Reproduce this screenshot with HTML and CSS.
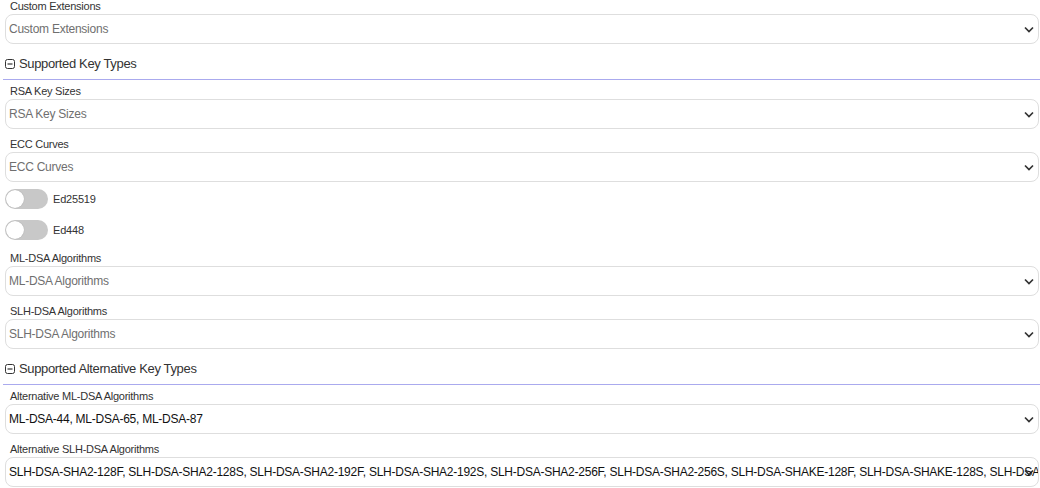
FILE: index.html
```html
<!doctype html>
<html lang="en">

<head>
  <meta charset="utf-8" />
  <meta name="viewport" content="width=device-width,initial-scale=1" />
  <title>Certificate Profile</title>
  <link rel="stylesheet" href="styles.css">
</head>

<body>
  <div id="root">
    <div class="field">
      <div class="label">Custom Extensions</div>
      <div class="select placeholder">Custom Extensions</div>
    </div>

    <div class="section-header">
      <svg class="toggle-icon" width="10" height="10" viewBox="0 0 10 10">
        <rect x="0.5" y="0.5" width="9" height="9" rx="2" fill="none" stroke="#333" stroke-width="1" />
        <line x1="2.5" y1="5" x2="7.5" y2="5" stroke="#333" stroke-width="1.2" />
      </svg>
      <span>Supported Key Types</span>
    </div>

    <div class="field">
      <div class="label">RSA Key Sizes</div>
      <div class="select placeholder">RSA Key Sizes</div>
    </div>
    <div class="field">
      <div class="label">ECC Curves</div>
      <div class="select placeholder">ECC Curves</div>
    </div>

    <div class="switches">
      <label class="switch-row">
        <span class="switch"><span class="knob"></span></span>
        <span class="switch-label">Ed25519</span>
      </label>
      <label class="switch-row">
        <span class="switch"><span class="knob"></span></span>
        <span class="switch-label">Ed448</span>
      </label>
    </div>

    <div class="field">
      <div class="label">ML-DSA Algorithms</div>
      <div class="select placeholder">ML-DSA Algorithms</div>
    </div>
    <div class="field">
      <div class="label">SLH-DSA Algorithms</div>
      <div class="select placeholder">SLH-DSA Algorithms</div>
    </div>

    <div class="section-header">
      <svg class="toggle-icon" width="10" height="10" viewBox="0 0 10 10">
        <rect x="0.5" y="0.5" width="9" height="9" rx="2" fill="none" stroke="#333" stroke-width="1" />
        <line x1="2.5" y1="5" x2="7.5" y2="5" stroke="#333" stroke-width="1.2" />
      </svg>
      <span>Supported Alternative Key Types</span>
    </div>

    <div class="field">
      <div class="label">Alternative ML-DSA Algorithms</div>
      <div class="select">ML-DSA-44, ML-DSA-65, ML-DSA-87</div>
    </div>
    <div class="field">
      <div class="label">Alternative SLH-DSA Algorithms</div>
      <div class="select">SLH-DSA-SHA2-128F, SLH-DSA-SHA2-128S, SLH-DSA-SHA2-192F, SLH-DSA-SHA2-192S, SLH-DSA-SHA2-256F, SLH-DSA-SHA2-256S, SLH-DSA-SHAKE-128F, SLH-DSA-SHAKE-128S, SLH-DSA-SHAKE-192F, SLH-DSA-SHAKE-192S</div>
    </div>
  </div>
</body>

</html>
```

FILE: styles.css
```css
html,
body {
  margin: 0;
  padding: 0;
  background: #fff;
}

* {
  font-family: "Liberation Sans", Arial, sans-serif;
  box-sizing: border-box;
}

#root {
  margin-top: -2px;
  padding-left: 3px;
  overflow: hidden;
}

.field {
  margin: 0 1px 7px 2px;
}

.field .label {
  font-size: 11px;
  letter-spacing: -0.25px;
  line-height: 16px;
  color: #333;
  padding-left: 5px;
  white-space: nowrap;
}

.select {
  height: 30px;
  line-height: 28px;
  border: 1px solid #dedede;
  border-radius: 8px;
  padding-left: 3px;
  padding-right: 2px;
  font-size: 12px;
  letter-spacing: -0.25px;
  color: #111;
  white-space: nowrap;
  overflow: hidden;
  background-image: url("data:image/svg+xml,%3Csvg xmlns='http://www.w3.org/2000/svg' width='10' height='7' viewBox='0 0 10 7'%3E%3Cpath d='M1 1.5l4 4 4-4' fill='none' stroke='%23333' stroke-width='1.7'/%3E%3C/svg%3E");
  background-repeat: no-repeat;
  background-position: right 4px center;
}

.select.placeholder {
  color: #6f6f6f;
}

.section-header {
  display: flex;
  align-items: center;
  gap: 4px;
  padding: 3px 0 5px 2px;
  line-height: 20px;
  font-size: 13px;
  letter-spacing: -0.35px;
  color: #333;
  border-bottom: 1px solid #aaaaee;
  margin-bottom: 3px;
}

.toggle-icon {
  flex-shrink: 0;
}

.switches {
  padding-left: 2px;
  margin-bottom: 10px;
}

.switch-row {
  display: flex;
  align-items: center;
  gap: 5px;
  margin-top: 3px;
  margin-bottom: 11px;
}

.switch-row:last-child {
  margin-bottom: 0;
}

.switch {
  position: relative;
  width: 43px;
  height: 20px;
  border-radius: 10px;
  background: #c8c8c8;
}

.switch .knob {
  position: absolute;
  left: 1px;
  top: 1px;
  width: 18px;
  height: 18px;
  border-radius: 50%;
  background: #fff;
  box-shadow: 0 0 1px #0004;
}

.switch-label {
  font-size: 11px;
  letter-spacing: -0.2px;
  color: #333;
}
```
